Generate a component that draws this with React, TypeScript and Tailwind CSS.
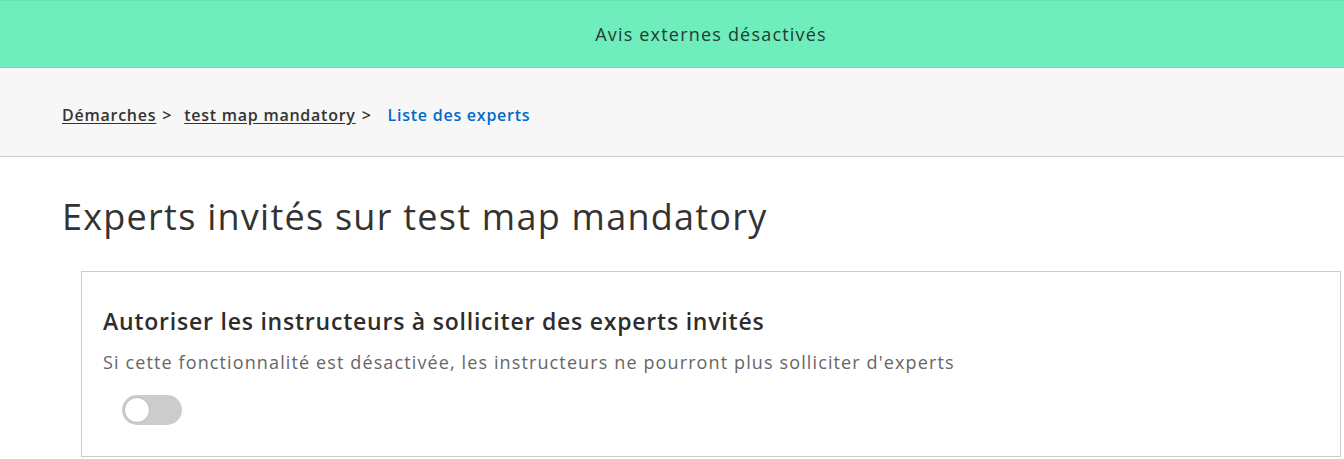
import React from "react";

export default function App() {
  const font = { fontFamily: '"Open Sans", "Liberation Sans", sans-serif' };
  return (
    <div className="w-[1344px] h-[459px] overflow-hidden bg-white text-[#333333]" style={font}>
      <div className="h-[68px] bg-[#6fedbd] border-t border-b border-[#62e4b2] flex items-center justify-center pl-[78px]">
        <span className="text-[18px] tracking-[1.2px] text-[#1e3d32]">Avis externes désactivés</span>
      </div>
      <div className="h-[89px] bg-[#f7f7f7] border-b border-[#cccccc] flex items-center pl-[62px] pt-[5px]">
        <nav className="flex items-center text-[16px] font-semibold tracking-[0.75px]">
          <a className="underline underline-offset-2 text-[#333333]">Démarches</a>
          <span className="ml-[6px] mr-[12px] text-[#333333]">&gt;</span>
          <a className="underline underline-offset-2 text-[#333333]">test map mandatory</a>
          <span className="ml-[6px] mr-[16px] text-[#333333]">&gt;</span>
          <span className="text-[#0069cc]">Liste des experts</span>
        </nav>
      </div>
      <div className="pl-[62px] pt-[38px]">
        <h1 className="text-[36px] leading-[44px] font-normal tracking-[1.25px] text-[#333333]">Experts invités sur test map mandatory</h1>
      </div>
      <div className="ml-[81px] mr-[3px] mt-[32px] border border-[#cccccc] h-[186px] pl-[21px] pt-[34px]">
        <h2 className="text-[23px] leading-[30px] font-semibold tracking-[0.78px] text-[#2d2d2d]">Autoriser les instructeurs à solliciter des experts invités</h2>
        <p className="mt-[14px] text-[18px] leading-[24px] tracking-[1.12px] text-[#666666]">Si cette fonctionnalité est désactivée, les instructeurs ne pourront plus solliciter d'experts</p>
        <div className="mt-[21px] ml-[19px] w-[60px] h-[30px] rounded-full bg-[#cccccc] p-[2px] flex items-center">
          <div className="w-[26px] h-[26px] rounded-full bg-white border border-[#bbbbbb]" />
        </div>
      </div>
    </div>
  );
}
